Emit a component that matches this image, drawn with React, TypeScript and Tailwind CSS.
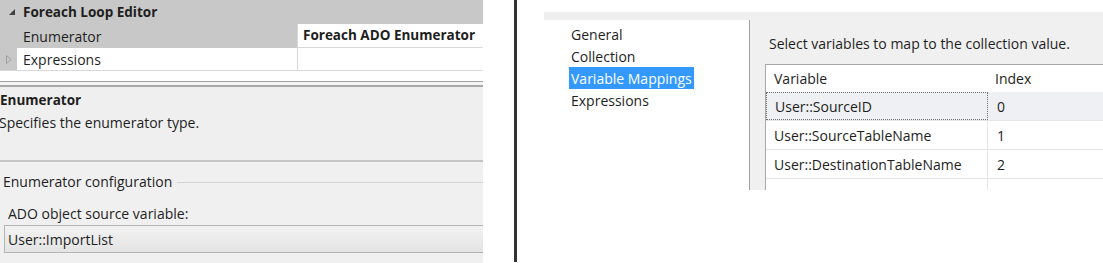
import React from 'react';

const font = { fontFamily: '"Open Sans", "Noto Sans", sans-serif' };

// little expander glyphs of the property grid
const Expanded = () => (
  <svg width="6" height="6" viewBox="0 0 6 6" className="block">
    <path d="M6 0 L6 6 L0 6 Z" fill="#404040" />
  </svg>
);

const Collapsed = () => (
  <svg width="6" height="9" viewBox="0 0 6 9" className="block">
    <path d="M0.5 0.5 L5 4.5 L0.5 8.5 Z" fill="none" stroke="#a0a0a0" />
  </svg>
);

function PropertyPane() {
  return (
    <div className="w-[483px] h-[263px] flex flex-col text-[14px] text-[#1e1e1e] bg-[#f0f0f0]">
      {/* grid */}
      <div className="bg-white">
        <div className="h-[24px] bg-[#c8c8c8] flex items-center">
          <div className="w-[23px] flex justify-center pl-[1px]">
            <Expanded />
          </div>
          <span className="font-bold text-[13.5px]">Foreach Loop Editor</span>
        </div>
        <div className="h-[24px] flex bg-[#c8c8c8]">
          <div className="w-[297px] pl-[23px] flex items-center">Enumerator</div>
          <div className="flex-1 bg-white border-l border-b border-[#d8d8d8] pl-[5px] flex items-center font-bold text-[13.5px]">
            Foreach ADO Enumerator
          </div>
        </div>
        <div className="h-[23px] flex border-b border-[#d8d8d8]">
          <div className="w-[17px] bg-[#c8c8c8] flex items-center justify-center">
            <Collapsed />
          </div>
          <div className="w-[280px] pl-[6px] flex items-center">Expressions</div>
          <div className="flex-1 border-l border-[#d8d8d8]" />
        </div>
        <div className="h-[10px]" />
      </div>
      {/* splitter */}
      <div className="h-[1px] bg-[#a0a0a0]" />
      <div className="h-[3px] bg-[#f4f4f4]" />
      <div className="h-[2px] bg-[#a8a8a8]" />
      {/* description */}
      <div className="h-[73px] bg-[#efefef] pt-[4px]">
        <div className="font-bold text-[13.5px] leading-[18px]">Enumerator</div>
        <div className="leading-[18px] mt-[5px] -ml-[1px]">Specifies the enumerator type.</div>
      </div>
      <div className="h-[2px] bg-[#c4c4c4]" />
      {/* enumerator configuration group */}
      <div className="flex-1 bg-[#f0f0f0]">
        <div className="flex items-center h-[18px] mt-[11px] pl-[3px]">
          <span className="leading-[18px]">Enumerator configuration</span>
          <div className="flex-1 h-[1px] bg-[#d5d5d5] ml-[5px]" />
        </div>
        <div className="pl-[8px] mt-[14px] leading-[18px]">ADO object source variable:</div>
        <div className="ml-[4px] mt-[2px] h-[28px] border border-r-0 border-[#b4b4b4] bg-gradient-to-b from-[#f2f2f2] to-[#e4e4e4] flex items-center pl-[3px]">
          User::ImportList
        </div>
      </div>
    </div>
  );
}

const rows = [
  { name: 'User::SourceID', index: '0' },
  { name: 'User::SourceTableName', index: '1' },
  { name: 'User::DestinationTableName', index: '2' },
];

function MappingDialog() {
  const pages = ['General', 'Collection', 'Variable Mappings', 'Expressions'];
  return (
    <div className="flex-1 pt-[12px] pl-[27px] text-[14px] text-[#1e1e1e]">
      <div className="h-[178px] bg-[#f0f0f0] pt-[8px] flex">
        <div className="w-[206px] bg-white border-r border-[#a0a0a0] pt-[3px] pl-[27px]">
          {pages.map((p) => (
            <div key={p} className="h-[22px] flex items-center">
              {p === 'Variable Mappings' ? (
                <span className="bg-[#3399ff] text-white h-[22px] flex items-center px-[2px] -ml-[2px]">{p}</span>
              ) : (
                <span>{p}</span>
              )}
            </div>
          ))}
        </div>
        <div className="flex-1 pl-[15px] flex flex-col">
          <div className="ml-[4px] mt-[15px] leading-[18px]">Select variables to map to the collection value.</div>
          <div className="mt-[11px] flex-1 bg-white border-t border-l border-[#a8a8a8] overflow-hidden">
            <div className="h-[27px] flex">
              <div className="w-[222px] pl-[8px] flex items-center">Variable</div>
              <div className="flex-1 pl-[7px] flex items-center">Index</div>
            </div>
            {rows.map((r, i) => (
              <div
                key={r.name}
                className={`h-[29px] flex border-b border-[#e6e6e6] ${i === 0 ? 'bg-[#eef0f3]' : ''}`}
              >
                <div
                  className={`w-[222px] pl-[8px] flex items-center ${
                    i === 0 ? 'border border-dotted border-[#707070]' : 'border-r border-[#e6e6e6]'
                  }`}
                >
                  {r.name}
                </div>
                <div className="flex-1 pl-[9px] flex items-center">{r.index}</div>
              </div>
            ))}
            <div className="h-[20px] flex">
              <div className="w-[222px] border-r border-[#e6e6e6]" />
            </div>
          </div>
        </div>
      </div>
    </div>
  );
}

export default function App() {
  return (
    <div className="w-[1103px] h-[263px] bg-white flex overflow-hidden" style={font}>
      <PropertyPane />
      <div className="w-[31px]" />
      <div className="w-[3px] h-[262px] bg-[#333333]" />
      <MappingDialog />
    </div>
  );
}
